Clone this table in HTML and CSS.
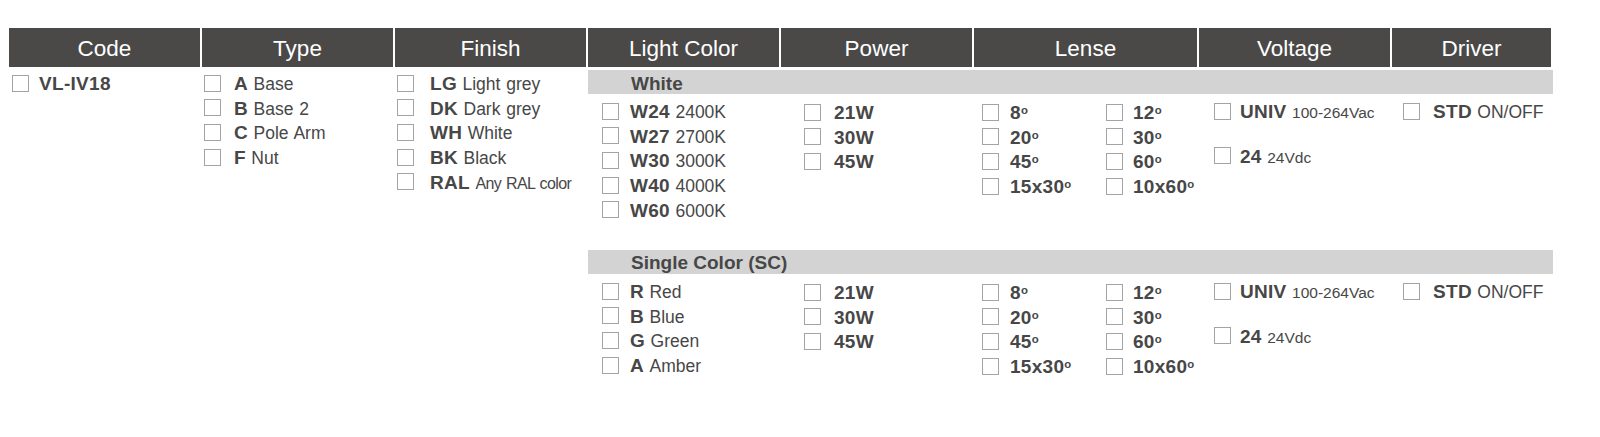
FILE: index.html
```html
<!DOCTYPE html>
<html lang="en">
<head>
<meta charset="utf-8">
<title>VL-IV18 ordering</title>
<link rel="stylesheet" href="styles.css">
</head>
<body>
<div class="sheet">
  <div class="head">
    <div class="hcell">Code</div>
    <div class="hcell">Type</div>
    <div class="hcell">Finish</div>
    <div class="hcell">Light Color</div>
    <div class="hcell">Power</div>
    <div class="hcell">Lense</div>
    <div class="hcell">Voltage</div>
    <div class="hcell">Driver</div>
  </div>
  <div class="body">
    <div class="col c-code">
      <div class="item"><span class="cb"></span><span class="lbl"><b>VL-IV18</b></span></div>
    </div>
    <div class="col c-type">
      <div class="item"><span class="cb"></span><span class="lbl"><b>A</b> <span class="d">Base</span></span></div>
      <div class="item"><span class="cb"></span><span class="lbl"><b>B</b> <span class="d">Base 2</span></span></div>
      <div class="item"><span class="cb"></span><span class="lbl"><b>C</b> <span class="d">Pole Arm</span></span></div>
      <div class="item"><span class="cb"></span><span class="lbl"><b>F</b> <span class="d">Nut</span></span></div>
    </div>
    <div class="col c-finish">
      <div class="item"><span class="cb"></span><span class="lbl"><b>LG</b> <span class="d">Light grey</span></span></div>
      <div class="item"><span class="cb"></span><span class="lbl"><b>DK</b> <span class="d">Dark grey</span></span></div>
      <div class="item"><span class="cb"></span><span class="lbl"><b>WH</b> <span class="d">White</span></span></div>
      <div class="item"><span class="cb"></span><span class="lbl"><b>BK</b> <span class="d">Black</span></span></div>
      <div class="item"><span class="cb"></span><span class="lbl"><b>RAL</b> <span class="d cond">Any RAL color</span></span></div>
    </div>
    <div class="right">
      <section class="group">
        <div class="band">White</div>
        <div class="grid">
          <div class="col c-lc">
            <div class="item"><span class="cb"></span><span class="lbl"><b>W24</b> <span class="d">2400K</span></span></div>
            <div class="item"><span class="cb"></span><span class="lbl"><b>W27</b> <span class="d">2700K</span></span></div>
            <div class="item"><span class="cb"></span><span class="lbl"><b>W30</b> <span class="d">3000K</span></span></div>
            <div class="item"><span class="cb"></span><span class="lbl"><b>W40</b> <span class="d">4000K</span></span></div>
            <div class="item"><span class="cb"></span><span class="lbl"><b>W60</b> <span class="d">6000K</span></span></div>
          </div>
          <div class="col c-power">
            <div class="item"><span class="cb"></span><span class="lbl"><b>21W</b></span></div>
            <div class="item"><span class="cb"></span><span class="lbl"><b>30W</b></span></div>
            <div class="item"><span class="cb"></span><span class="lbl"><b>45W</b></span></div>
          </div>
          <div class="col c-lense">
            <div class="lcol">
              <div class="item"><span class="cb"></span><span class="lbl"><b>8<span class="deg">o</span></b></span></div>
              <div class="item"><span class="cb"></span><span class="lbl"><b>20<span class="deg">o</span></b></span></div>
              <div class="item"><span class="cb"></span><span class="lbl"><b>45<span class="deg">o</span></b></span></div>
              <div class="item"><span class="cb"></span><span class="lbl"><b>15x30<span class="deg">o</span></b></span></div>
            </div>
            <div class="lcol">
              <div class="item"><span class="cb"></span><span class="lbl"><b>12<span class="deg">o</span></b></span></div>
              <div class="item"><span class="cb"></span><span class="lbl"><b>30<span class="deg">o</span></b></span></div>
              <div class="item"><span class="cb"></span><span class="lbl"><b>60<span class="deg">o</span></b></span></div>
              <div class="item"><span class="cb"></span><span class="lbl"><b>10x60<span class="deg">o</span></b></span></div>
            </div>
          </div>
          <div class="col c-volt">
            <div class="item"><span class="cb"></span><span class="lbl"><b>UNIV</b> <span class="d sm">100-264Vac</span></span></div>
            <div class="item"><span class="cb"></span><span class="lbl"><b>24</b> <span class="d sm">24Vdc</span></span></div>
          </div>
          <div class="col c-driver">
            <div class="item"><span class="cb"></span><span class="lbl"><b>STD</b> <span class="d">ON/OFF</span></span></div>
          </div>
        </div>
      </section>
      <section class="group sc">
        <div class="band">Single Color (SC)</div>
        <div class="grid">
          <div class="col c-lc">
            <div class="item"><span class="cb"></span><span class="lbl"><b>R</b> <span class="d">Red</span></span></div>
            <div class="item"><span class="cb"></span><span class="lbl"><b>B</b> <span class="d">Blue</span></span></div>
            <div class="item"><span class="cb"></span><span class="lbl"><b>G</b> <span class="d">Green</span></span></div>
            <div class="item"><span class="cb"></span><span class="lbl"><b>A</b> <span class="d">Amber</span></span></div>
          </div>
          <div class="col c-power">
            <div class="item"><span class="cb"></span><span class="lbl"><b>21W</b></span></div>
            <div class="item"><span class="cb"></span><span class="lbl"><b>30W</b></span></div>
            <div class="item"><span class="cb"></span><span class="lbl"><b>45W</b></span></div>
          </div>
          <div class="col c-lense">
            <div class="lcol">
              <div class="item"><span class="cb"></span><span class="lbl"><b>8<span class="deg">o</span></b></span></div>
              <div class="item"><span class="cb"></span><span class="lbl"><b>20<span class="deg">o</span></b></span></div>
              <div class="item"><span class="cb"></span><span class="lbl"><b>45<span class="deg">o</span></b></span></div>
              <div class="item"><span class="cb"></span><span class="lbl"><b>15x30<span class="deg">o</span></b></span></div>
            </div>
            <div class="lcol">
              <div class="item"><span class="cb"></span><span class="lbl"><b>12<span class="deg">o</span></b></span></div>
              <div class="item"><span class="cb"></span><span class="lbl"><b>30<span class="deg">o</span></b></span></div>
              <div class="item"><span class="cb"></span><span class="lbl"><b>60<span class="deg">o</span></b></span></div>
              <div class="item"><span class="cb"></span><span class="lbl"><b>10x60<span class="deg">o</span></b></span></div>
            </div>
          </div>
          <div class="col c-volt">
            <div class="item"><span class="cb"></span><span class="lbl"><b>UNIV</b> <span class="d sm">100-264Vac</span></span></div>
            <div class="item"><span class="cb"></span><span class="lbl"><b>24</b> <span class="d sm">24Vdc</span></span></div>
          </div>
          <div class="col c-driver">
            <div class="item"><span class="cb"></span><span class="lbl"><b>STD</b> <span class="d">ON/OFF</span></span></div>
          </div>
        </div>
      </section>
    </div>
  </div>
</div>
</body>
</html>
```
FILE: styles.css
```css
html, body {
  margin: 0;
  padding: 0;
  background: #ffffff;
}

body {
  font-family: "Liberation Sans", Arial, sans-serif;
  color: #474747;
}

.sheet {
  padding: 28px 0 0 9px;
}

.head {
  display: grid;
  grid-template-columns: 191px 191px 191px 191px 191px 223px 191px 159px;
  column-gap: 2px;
}

.hcell {
  height: 39px;
  box-sizing: border-box;
  padding-top: 3px;
  background: #4a4948;
  color: #ffffff;
  font-size: 22.5px;
  display: flex;
  align-items: center;
  justify-content: center;
}

.body {
  display: grid;
  grid-template-columns: 191px 191px 191px 965px;
  column-gap: 2px;
  align-items: start;
}

.col {
  display: flex;
  flex-direction: column;
}

.body > .col {
  padding-top: 4px;
}

.item {
  display: flex;
  align-items: center;
  height: 24.6px;
  gap: var(--g, 11px);
  padding-left: var(--x, 0px);
  white-space: nowrap;
}

.cb {
  flex: none;
  width: 17px;
  height: 17px;
  box-sizing: border-box;
  border: 1px solid #a4a4a4;
  background: #ffffff;
}

.lbl {
  padding-top: 2px;
  word-spacing: 1px;
}

.lbl b {
  font-weight: 700;
  font-size: 19px;
  letter-spacing: 0.3px;
}

.d {
  font-size: 17.5px;
  font-weight: 400;
}

.d.sm {
  font-size: 15.5px;
}

.d.cond {
  font-size: 16px;
  letter-spacing: -0.6px;
}

.deg {
  font-size: 0.6em;
  vertical-align: 0.45em;
  letter-spacing: 0;
}

.c-code { --x: 3px; --g: 10px; }
.c-type { --x: 2px; --g: 13px; }
.c-finish { --x: 2px; --g: 16px; }

.right {
  display: flex;
  flex-direction: column;
}

.band {
  height: 24px;
  box-sizing: border-box;
  padding-top: 3px;
  margin-top: 3px;
  background: #d3d3d3;
  display: flex;
  align-items: center;
  padding-left: 43px;
  font-weight: 700;
  font-size: 19px;
}

.group.sc {
  margin-top: 28px;
}

.group.sc .band {
  margin-top: 0;
}

.grid {
  display: grid;
  grid-template-columns: 191px 191px 223px 191px 159px;
  column-gap: 2px;
  padding-top: 5px;
  align-items: start;
}

.c-lc { --x: 14px; --g: 11px; }
.c-power { --x: 23px; --g: 13px; padding-top: 1px; }
.c-lense {
  flex-direction: row;
  padding-top: 1px;
}
.lcol { display: flex; flex-direction: column; }
.lcol:first-child { --x: 8px; --g: 11px; width: 132px; }
.lcol:last-child { --x: 0px; --g: 10px; }
.c-volt { --x: 15px; --g: 9px; row-gap: 20px; }
.c-driver { --x: 11px; --g: 13px; }
```
